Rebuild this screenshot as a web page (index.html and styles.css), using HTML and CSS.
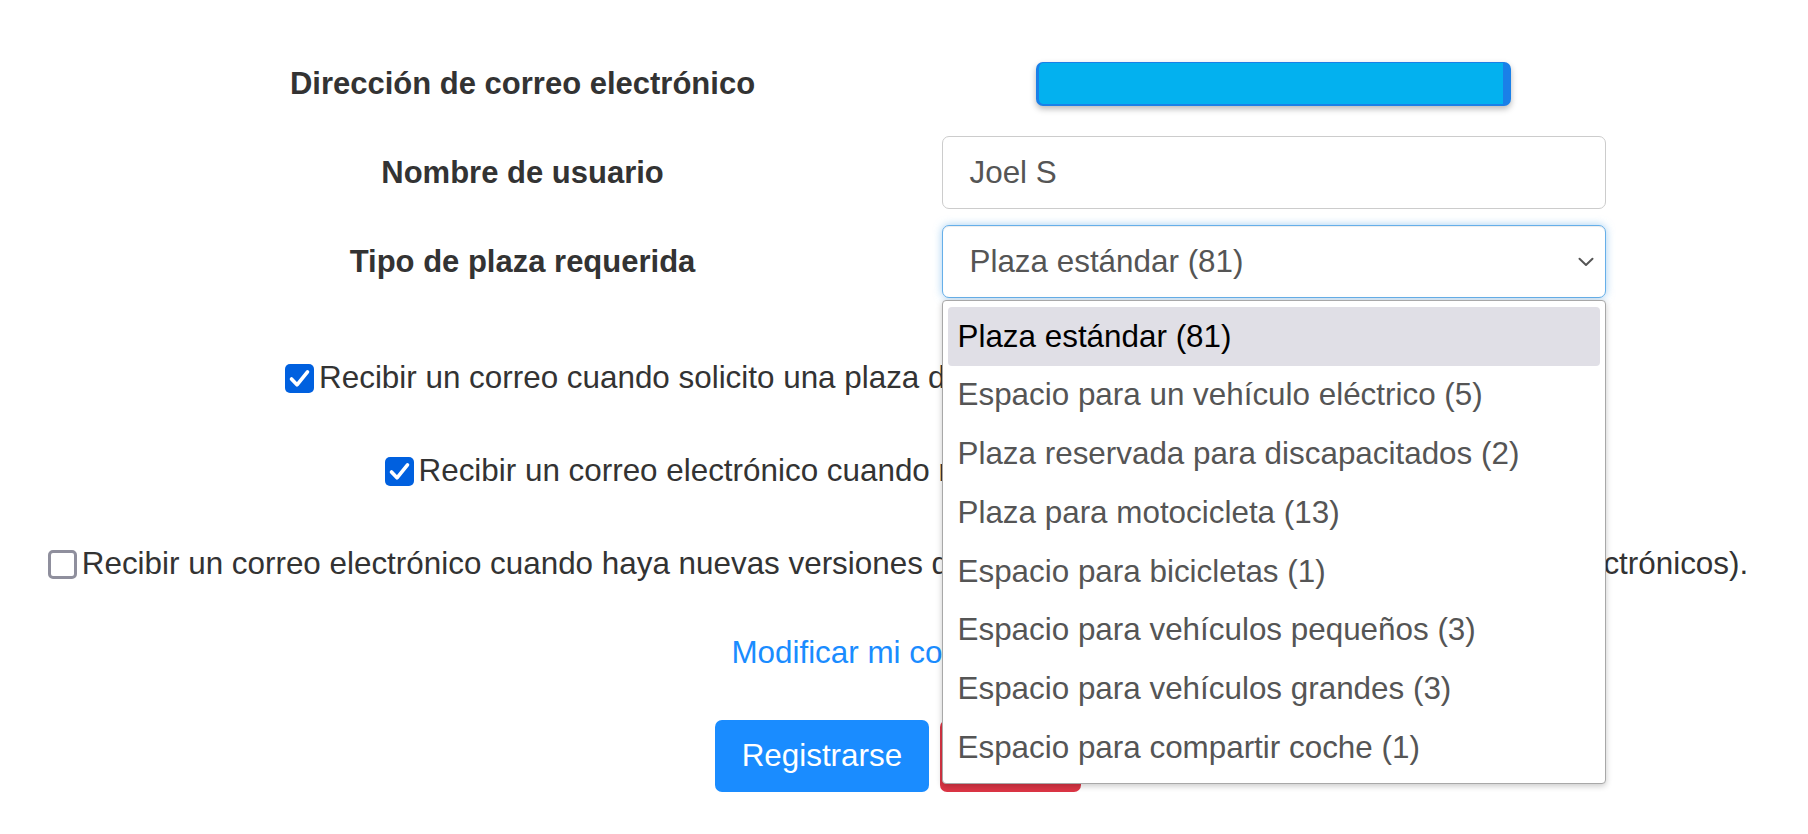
FILE: index.html
```html
<!DOCTYPE html>
<html lang="es">
<head>
<meta charset="utf-8">
<title>Registro</title>
<link rel="stylesheet" href="styles.css">
</head>
<body>
<main class="page">
  <form class="form">
    <div class="rows">
      <div class="row">
        <label class="label">Dirección de correo electrónico</label>
        <div class="field"><div class="redacted"></div></div>
      </div>
      <div class="row">
        <label class="label">Nombre de usuario</label>
        <div class="field"><div class="input">Joel S</div></div>
      </div>
      <div class="row">
        <label class="label">Tipo de plaza requerida</label>
        <div class="field">
          <div class="select-wrap">
            <div class="select">
              <span>Plaza estándar (81)</span>
              <svg class="chevron" width="16" height="10" viewBox="0 0 16 10"><path d="M1.5 1.8 L8 8 L14.5 1.8" fill="none" stroke="#555" stroke-width="2" stroke-linecap="round" stroke-linejoin="round"/></svg>
            </div>
            <ul class="dropdown">
              <li class="option active">Plaza estándar (81)</li>
              <li class="option">Espacio para un vehículo eléctrico (5)</li>
              <li class="option">Plaza reservada para discapacitados (2)</li>
              <li class="option">Plaza para motocicleta (13)</li>
              <li class="option">Espacio para bicicletas (1)</li>
              <li class="option">Espacio para vehículos pequeños (3)</li>
              <li class="option">Espacio para vehículos grandes (3)</li>
              <li class="option">Espacio para compartir coche (1)</li>
            </ul>
          </div>
        </div>
      </div>
    </div>

    <div class="checks">
      <label class="check-row">
        <span class="cb checked"><svg width="29" height="29" viewBox="0 0 29 29"><path d="M6.5 15 L12 20.8 L22.5 7.8" fill="none" stroke="#fff" stroke-width="3.6" stroke-linecap="round" stroke-linejoin="round"/></svg></span>
        <span>Recibir un correo cuando solicito una plaza de aparcamiento y cuando me la asignan.</span>
      </label>
      <label class="check-row">
        <span class="cb checked"><svg width="29" height="29" viewBox="0 0 29 29"><path d="M6.5 15 L12 20.8 L22.5 7.8" fill="none" stroke="#fff" stroke-width="3.6" stroke-linecap="round" stroke-linejoin="round"/></svg></span>
        <span>Recibir un correo electrónico cuando recibo una plaza de aparcamiento</span>
      </label>
      <label class="check-row">
        <span class="cb unchecked"></span>
        <span>Recibir un correo electrónico cuando haya nuevas versiones de la aplicación (apenas unos pocos correos electrónicos).</span>
      </label>
    </div>

    <a class="link" href="#">Modificar mi contraseña</a>

    <div class="buttons">
      <button type="button" class="btn btn-primary">Registrarse</button>
      <button type="button" class="btn btn-danger">Volver</button>
    </div>
  </form>
</main>
</body>
</html>
```

FILE: styles.css
```css
html, body {
  margin: 0;
  padding: 0;
  background: #fff;
}

body {
  font-family: "Liberation Sans", Arial, sans-serif;
  font-size: 31.4px;
  color: #333;
  line-height: 1.2;
}

.page {
  padding: 47px 12px 0 0;
}

.rows {
  width: 1502px;
  margin: 0 auto;
  display: flex;
  flex-direction: column;
  gap: 16px;
}

.row {
  display: grid;
  grid-template-columns: 1fr 1fr;
  height: 73px;
  align-items: center;
}

.label {
  text-align: center;
  font-weight: bold;
  font-size: 31px;
  color: #333;
}

.field {
  display: flex;
  justify-content: center;
  align-items: center;
}

.redacted {
  width: 475px;
  height: 44px;
  box-sizing: border-box;
  background: #03b1ef;
  border-style: solid;
  border-color: #1a80e8;
  border-width: 1px 8px 2px 3px;
  border-radius: 7px;
  box-shadow: 0 3px 6px rgba(0, 0, 0, 0.28);
}

.input,
.select {
  width: 664px;
  height: 73px;
  box-sizing: border-box;
  border: 1px solid #ccc;
  border-radius: 7px;
  padding: 0 11px 0 27px;
  display: flex;
  align-items: center;
  color: #555;
  background: #fff;
}

.select-wrap {
  position: relative;
  width: 664px;
}

.select {
  justify-content: space-between;
  border-color: #66afe9;
  box-shadow: inset 0 1px 1px rgba(0, 0, 0, 0.075), 0 0 8px rgba(102, 175, 233, 0.6);
}

.chevron {
  display: block;
}

.dropdown {
  position: absolute;
  top: 75px;
  left: 0;
  width: 664px;
  box-sizing: border-box;
  margin: 0;
  padding: 6px 5px;
  list-style: none;
  background: #fff;
  border: 1px solid #a8a8a8;
  border-radius: 4px;
  box-shadow: 0 2px 6px rgba(0, 0, 0, 0.22);
  z-index: 10;
}

.option {
  height: 58.75px;
  display: flex;
  align-items: center;
  padding-left: 10px;
  color: #555;
  border-radius: 4px;
}

.option.active {
  background: #e0dfe6;
  color: #000;
}

.checks {
  margin-top: 60px;
  display: flex;
  flex-direction: column;
  align-items: center;
  gap: 53px;
}

.check-row {
  height: 40px;
  display: flex;
  align-items: center;
  gap: 5px;
  color: #333;
  white-space: nowrap;
}

.cb {
  width: 29px;
  height: 29px;
  box-sizing: border-box;
  border-radius: 5px;
  flex: none;
  display: block;
}

.cb svg {
  display: block;
}

.cb.checked {
  background: #0060df;
}

.cb.unchecked {
  background: #fff;
  border: 3.5px solid #8f8f9d;
}

.link {
  display: block;
  margin-top: 49px;
  line-height: 40px;
  text-align: center;
  color: #1a8cff;
  text-decoration: none;
}

.buttons {
  margin-top: 47px;
  display: flex;
  justify-content: center;
  gap: 11px;
}

.btn {
  height: 72px;
  padding: 0 27px;
  border: none;
  border-radius: 7px;
  color: #fff;
  font-family: inherit;
  font-size: 31.4px;
}

.btn-primary {
  background: #1a8cff;
}

.btn-danger {
  background: #dc3545;
}
```
